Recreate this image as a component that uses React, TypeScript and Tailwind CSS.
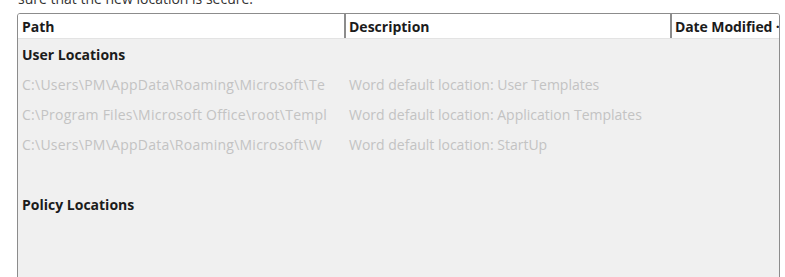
const font = { fontFamily: '"Open Sans", "Noto Sans", sans-serif' };

const userRows = [
  ["C:\\Users\\PM\\AppData\\Roaming\\Microsoft\\Te", "Word default location: User Templates"],
  ["C:\\Program Files\\Microsoft Office\\root\\Templ", "Word default location: Application Templates"],
  ["C:\\Users\\PM\\AppData\\Roaming\\Microsoft\\W", "Word default location: StartUp"],
];

export default function App() {
  return (
    <div className="w-[785px] h-[277px] overflow-hidden bg-white text-[#1b1b1b]" style={font}>
      <div className="pl-[18px] mt-[-11px] h-[24px] text-[14px] leading-[20px] text-[#333]">
        sure that the new location is secure.
      </div>
      <div className="ml-[17px] w-[763px] h-[300px] border border-[#8c8c8c] rounded-t-[3px] bg-[#f0f0f0] overflow-hidden">
        <div className="flex h-[25px] bg-white border-b border-[#e3e3e3] text-[14px] font-bold leading-[26px] whitespace-nowrap overflow-hidden">
          <div className="w-[328px] shrink-0 pl-[4px] border-r-2 border-[#8c8c8c]">Path</div>
          <div className="w-[326px] shrink-0 pl-[3px] border-r-2 border-[#8c8c8c]">Description</div>
          <div className="shrink-0 pl-[3px] tracking-[-0.1px]">Date Modified ·</div>
        </div>
        <div className="pt-[1px]">
          <div className="h-[30px] pl-[4px] text-[14px] font-bold leading-[30px]">User Locations</div>
          {userRows.map(([p, d]) => (
            <div key={p} className="flex h-[30px] text-[14px] leading-[30px] text-[#c3c3c3] whitespace-nowrap">
              <div className="w-[328px] shrink-0 pl-[4px] overflow-hidden tracking-[0.25px]">{p}</div>
              <div className="pl-[3px]">{d}</div>
            </div>
          ))}
          <div className="h-[30px]" />
          <div className="h-[30px] pl-[4px] text-[14px] font-bold leading-[30px]">Policy Locations</div>
        </div>
      </div>
    </div>
  );
}
